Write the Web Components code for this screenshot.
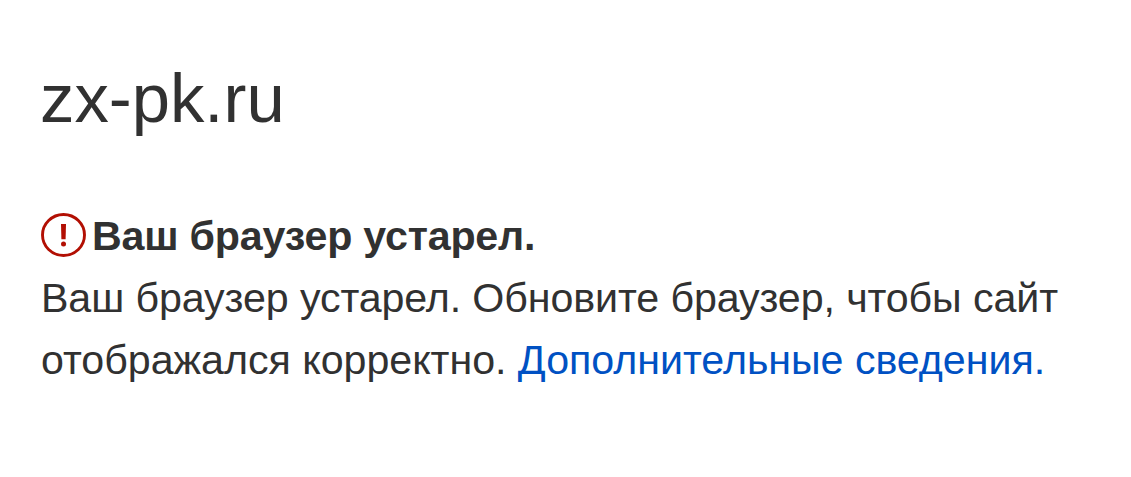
<!DOCTYPE html>
<html lang="ru">
<head>
<meta charset="utf-8">
<title>zx-pk.ru</title>
<style>
  html, body {
    margin: 0;
    background: #fff;
  }
  body {
    color: #313131;
    font-family: "Liberation Sans", Arial, sans-serif;
  }
  .lead {
    letter-spacing: -0.1px;
  }
</style>
</head>
<body>
<browser-notice host="zx-pk.ru">
  <span slot="title">Ваш браузер устарел.</span>
  <span class="lead">Ваш браузер устарел. Обновите браузер, чтобы сайт</span><br>отображался корректно.
  <notice-link slot="link" href="#">Дополнительные сведения.</notice-link>
</browser-notice>

<script>
class WarningIcon extends HTMLElement {
  constructor() {
    super();

    this.attachShadow({ mode: "open" }).innerHTML = `
      <style>
        :host {
          display: block;
          flex: none;
          width: 45px;
          height: 44px;
          margin-bottom: 2px;
        }
        svg {
          display: block;
        }
      </style>
      <svg width="45" height="44" viewBox="0 0 45 44" aria-hidden="true">
        <ellipse cx="22.5" cy="22" rx="21" ry="20.5" fill="none" stroke="#b20f03" stroke-width="2.9"/>
        <path d="M20 11h5l-.4 15.3h-4.2z" fill="#b20f03"/>
        <circle cx="22.5" cy="31" r="2.5" fill="#b20f03"/>
      </svg>
    `;
  }
}

class NoticeLink extends HTMLElement {
  static get observedAttributes() {
    return ["href"];
  }

  constructor() {
    super();

    this.attachShadow({ mode: "open" }).innerHTML = `
      <style>
        :host {
          display: inline;
        }
        a {
          color: #0051c3;
          text-decoration: none;
        }
        a:hover {
          text-decoration: underline;
        }
      </style>
      <a><slot></slot></a>
    `;
  }

  attributeChangedCallback(name, oldValue, newValue) {
    this.shadowRoot.querySelector("a").setAttribute(name, newValue);
  }
}

class BrowserNotice extends HTMLElement {
  static get observedAttributes() {
    return ["host"];
  }

  constructor() {
    super();

    this.attachShadow({ mode: "open" }).innerHTML = `
      <style>
        :host {
          display: block;
          padding: 58px 41px 0;
          font-size: 41.2px;
          line-height: 62px;
          white-space: nowrap;
        }
        h1 {
          margin: 0 0 65px -1px;
          font-size: 68.8px;
          font-weight: 400;
          line-height: 82px;
        }
        header {
          display: flex;
          align-items: center;
          gap: 6px;
        }
        h2 {
          margin: 0;
          font-size: 41.2px;
          line-height: 62px;
          letter-spacing: -0.2px;
        }
        p {
          margin: 0;
          letter-spacing: -0.03px;
        }
      </style>
      <h1></h1>
      <header>
        <warning-icon></warning-icon>
        <h2><slot name="title"></slot></h2>
      </header>
      <p><slot></slot> <slot name="link"></slot></p>
    `;
  }

  attributeChangedCallback(name, oldValue, newValue) {
    this.shadowRoot.querySelector("h1").textContent = newValue;
  }
}

window.customElements.define("warning-icon", WarningIcon);
window.customElements.define("notice-link", NoticeLink);
window.customElements.define("browser-notice", BrowserNotice);
</script>
</body>
</html>
